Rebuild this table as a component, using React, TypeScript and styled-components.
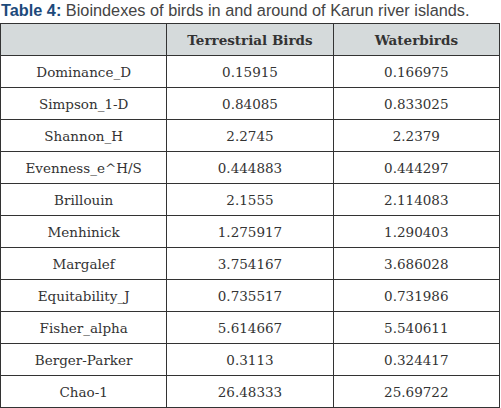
import React from "react";
import styled, { createGlobalStyle } from "styled-components";

const Global = createGlobalStyle`
  html, body { margin: 0; padding: 0; background: #fff; }
`;

const Wrap = styled.div`
  width: 501px;
  display: flex;
  flex-direction: column;
`;

const Caption = styled.div`
  font-family: "Liberation Sans", Arial, sans-serif;
  font-size: 16.3px;
  line-height: 20px;
  color: #444;
  height: 23px;
  padding-left: 1px;
`;

const CaptionLabel = styled.span`
  font-weight: bold;
  color: #1d4a7b;
`;

const Table = styled.table`
  width: 500px;
  border-collapse: collapse;
  table-layout: fixed;
  font-family: "DejaVu Serif", "Liberation Serif", serif;
  font-size: 13.5px;
  color: #333;
`;

const HeadCell = styled.th`
  background: #d5dadb;
  border: 1.5px solid #333;
  height: 31px;
  padding: 0;
  font-weight: bold;
  text-align: center;
`;

const Cell = styled.td`
  border: 1.5px solid #333;
  height: 31px;
  padding: 0;
  text-align: center;
`;

const rows: [string, string, string][] = [
  ["Dominance_D", "0.15915", "0.166975"],
  ["Simpson_1-D", "0.84085", "0.833025"],
  ["Shannon_H", "2.2745", "2.2379"],
  ["Evenness_e^H/S", "0.444883", "0.444297"],
  ["Brillouin", "2.1555", "2.114083"],
  ["Menhinick", "1.275917", "1.290403"],
  ["Margalef", "3.754167", "3.686028"],
  ["Equitability_J", "0.735517", "0.731986"],
  ["Fisher_alpha", "5.614667", "5.540611"],
  ["Berger-Parker", "0.3113", "0.324417"],
  ["Chao-1", "26.48333", "25.69722"],
];

export default function App() {
  return (
    <Wrap>
      <Global />
      <Caption>
        <CaptionLabel>Table 4:</CaptionLabel> Bioindexes of birds in and around of Karun river islands.
      </Caption>
      <Table>
        <thead>
          <tr>
            <HeadCell></HeadCell>
            <HeadCell>Terrestrial Birds</HeadCell>
            <HeadCell>Waterbirds</HeadCell>
          </tr>
        </thead>
        <tbody>
          {rows.map((r) => (
            <tr key={r[0]}>
              <Cell>{r[0]}</Cell>
              <Cell>{r[1]}</Cell>
              <Cell>{r[2]}</Cell>
            </tr>
          ))}
        </tbody>
      </Table>
    </Wrap>
  );
}
